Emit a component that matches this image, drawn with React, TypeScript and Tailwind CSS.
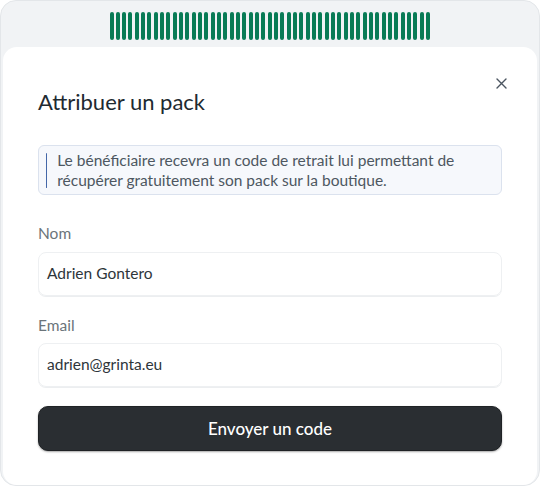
const bars = Array.from({ length: 51 })

export default function App() {
  return (
    <div className="h-[489px] w-[540px] bg-white font-['Lato',sans-serif]">
      <div className="flex h-[486px] flex-col rounded-[16px] border border-[#e3e6e9] bg-[#f1f3f5] px-[2px]">
        {/* progress bars */}
        <div className="flex h-[46px] justify-center pt-[11px]">
          <div className="flex h-[28px] w-[321px] justify-between">
            {bars.map((_, i) => (
              <span key={i} className="h-[28px] w-[4px] rounded-full bg-[#087b55]" />
            ))}
          </div>
        </div>

        {/* modal card */}
        <div className="relative flex flex-1 flex-col rounded-[14px] bg-white px-[35px] pt-[41px]">
          <button className="absolute right-[30px] top-[31px] text-[#4b5560]">
            <svg width="11" height="11" viewBox="0 0 11 11" fill="none" stroke="currentColor" strokeWidth="1.4" strokeLinecap="round">
              <path d="M1 1l9 9M10 1l-9 9" />
            </svg>
          </button>

          <h2 className="text-[22px] leading-[28px] text-[#1e2a31]">Attribuer un pack</h2>

          <div className="mt-[29px] flex h-[50px] items-center rounded-[6px] border border-[#dbe2ee] bg-[#f6f8fc] pl-[7px]">
            <span className="h-[35px] w-[2px] rounded-full bg-[#4467a8]" />
            <p className="pl-[10px] text-[15.5px] leading-[20px] text-[#4d5761]">
              Le bénéficiaire recevra un code de retrait lui permettant de récupérer gratuitement son pack sur la boutique.
            </p>
          </div>

          <label className="mt-[28px] text-[15.5px] leading-[20px] text-[#6b747a]">Nom</label>
          <div className="mt-[9px] flex h-[44px] items-center rounded-[8px] border border-[#eef0f2] px-[8px] text-[15.5px] text-[#2e353a] shadow-[0_1px_0_#eceef0]">
            Adrien Gontero
          </div>

          <label className="mt-[19px] text-[15.5px] leading-[20px] text-[#6b747a]">Email</label>
          <div className="mt-[8px] flex h-[44px] items-center rounded-[8px] border border-[#eef0f2] px-[8px] text-[15.5px] text-[#2e353a] shadow-[0_1px_0_#eceef0]">
            adrien@grinta.eu
          </div>

          <button className="mt-[19px] h-[45px] rounded-[10px] border border-[#1f2225] bg-[#2a2e32] text-[17px] font-medium text-white shadow-[0_1px_2px_rgba(0,0,0,0.35)]">
            Envoyer un code
          </button>
        </div>
      </div>
    </div>
  )
}
